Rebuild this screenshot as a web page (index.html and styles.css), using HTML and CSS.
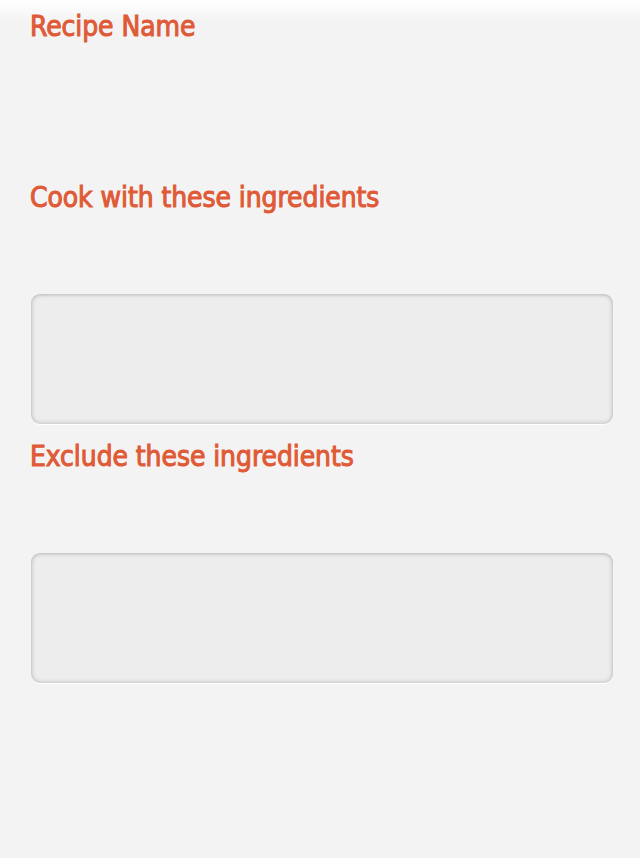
FILE: index.html
```html
<!DOCTYPE html>
<html>
<head>
<meta charset="utf-8">
<link rel="stylesheet" href="styles.css">
</head>
<body>
<form class="recipe-form">
  <section class="field field-name">
    <label class="field-label">Recipe Name</label>
    <div class="field-spacer"></div>
  </section>
  <section class="field">
    <label class="field-label">Cook with these ingredients</label>
    <div class="field-spacer"></div>
    <div class="text-box"></div>
  </section>
  <section class="field">
    <label class="field-label">Exclude these ingredients</label>
    <div class="field-spacer"></div>
    <div class="text-box"></div>
  </section>
</form>
</body>
</html>
```
FILE: styles.css
```css
html, body {
  margin: 0;
  padding: 0;
  height: 100%;
}
body {
  background: #f3f3f3 linear-gradient(to bottom, #ffffff 0px, #f3f3f3 22px) no-repeat;
  font-family: "DejaVu Sans Condensed", "DejaVu Sans", sans-serif;
}
.recipe-form {
  display: flex;
  flex-direction: column;
  padding: 9px 27px 0 30px;
}
.field {
  display: flex;
  flex-direction: column;
}
.field-label {
  font-size: 28px;
  line-height: 36px;
  color: #df5a37;
  -webkit-text-stroke: 1px #df5a37;
  text-shadow: 1px 1px 0 #ffffff;
  letter-spacing: -0.1px;
}
.field-name .field-spacer {
  height: 135px;
}
.field-spacer {
  height: 78px;
}
.text-box {
  margin-left: 1px;
  height: 130px;
  box-sizing: border-box;
  background: #ededed;
  border-radius: 9px;
  box-shadow: inset 0 0 4px 1px rgba(0,0,0,0.17), inset 0 1px 3px rgba(0,0,0,0.08), 0 1px 1px #ffffff;
  margin-bottom: 15px;
}
```
